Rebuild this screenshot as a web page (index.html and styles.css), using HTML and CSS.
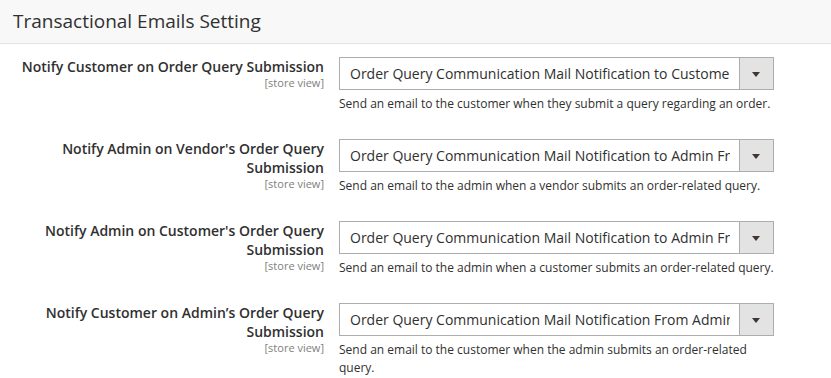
FILE: index.html
```html
<!DOCTYPE html>
<html lang="en">
<head>
    <meta charset="UTF-8">
    <meta name="viewport" content="width=device-width, initial-scale=1.0">
    <title>Transactional Emails Setting</title>
    <link rel="stylesheet" href="styles.css">
</head>
<body>

<div class="section-head">Transactional Emails Setting</div>

<div class="fields">
    <div class="field">
        <label class="field-label">
            Notify Customer on Order Query Submission
            <span class="scope">[store view]</span>
        </label>
        <div class="field-control">
            <div class="select">
                <span class="select-text">Order Query Communication Mail Notification to Customer When Submitted</span>
                <span class="select-arrow"></span>
            </div>
            <p class="note">Send an email to the customer when they submit a query regarding an order.</p>
        </div>
    </div>

    <div class="field">
        <label class="field-label">
            Notify Admin on Vendor's Order Query Submission
            <span class="scope">[store view]</span>
        </label>
        <div class="field-control">
            <div class="select">
                <span class="select-text">Order Query Communication Mail Notification to Admin From Vendor</span>
                <span class="select-arrow"></span>
            </div>
            <p class="note">Send an email to the admin when a vendor submits an order-related query.</p>
        </div>
    </div>

    <div class="field">
        <label class="field-label">
            Notify Admin on Customer's Order Query Submission
            <span class="scope">[store view]</span>
        </label>
        <div class="field-control">
            <div class="select">
                <span class="select-text">Order Query Communication Mail Notification to Admin From Customer</span>
                <span class="select-arrow"></span>
            </div>
            <p class="note">Send an email to the admin when a customer submits an order-related query.</p>
        </div>
    </div>

    <div class="field">
        <label class="field-label">
            Notify Customer on Admin’s Order Query Submission
            <span class="scope">[store view]</span>
        </label>
        <div class="field-control">
            <div class="select">
                <span class="select-text">Order Query Communication Mail Notification From Admin To Customer</span>
                <span class="select-arrow"></span>
            </div>
            <p class="note">Send an email to the customer when the admin submits an order-related query.</p>
        </div>
    </div>
</div>

</body>
</html>
```

FILE: styles.css
```css
html,
body {
    margin: 0;
    background: #fff;
    color: #303030;
    font-family: 'Open Sans', 'Liberation Sans', sans-serif;
    font-size: 14px;
}

/* section title */
.section-head {
    background: #f8f8f8;
    border-bottom: 1px solid #e3e3e3;
    height: 43px;
    line-height: 42px;
    padding: 0 13px;
    font-size: 19px;
    color: #303030;
}

.fields {
    padding-top: 13px;
}

.field {
    display: grid;
    grid-template-columns: 310px 435px;
    column-gap: 15px;
    padding-left: 14px;
    margin-bottom: 26px;
}

.field:last-child {
    margin-bottom: 0;
}

.field-label {
    text-align: right;
    font-weight: 600;
    line-height: 19px;
}

.scope {
    display: block;
    font-size: 11px;
    font-weight: 400;
    line-height: 14px;
    color: #808080;
}

/* fake select box */
.select {
    display: flex;
    height: 33px;
    box-sizing: border-box;
    border: 1px solid #adadad;
    background: #fff;
}

.select-text {
    flex: 1;
    overflow: hidden;
    white-space: nowrap;
    line-height: 31px;
    padding-left: 10px;
    margin-right: 9px;
}

.select-arrow {
    width: 33px;
    flex: none;
    background: #e3e3e3;
    border-left: 1px solid #adadad;
    position: relative;
}

.select-arrow::after {
    content: '';
    position: absolute;
    left: 12px;
    top: 14px;
    border-left: 4px solid transparent;
    border-right: 4px solid transparent;
    border-top: 5px solid #41362f;
}

.note {
    margin: 5px 0 0;
    font-size: 12px;
    line-height: 18px;
}
```
